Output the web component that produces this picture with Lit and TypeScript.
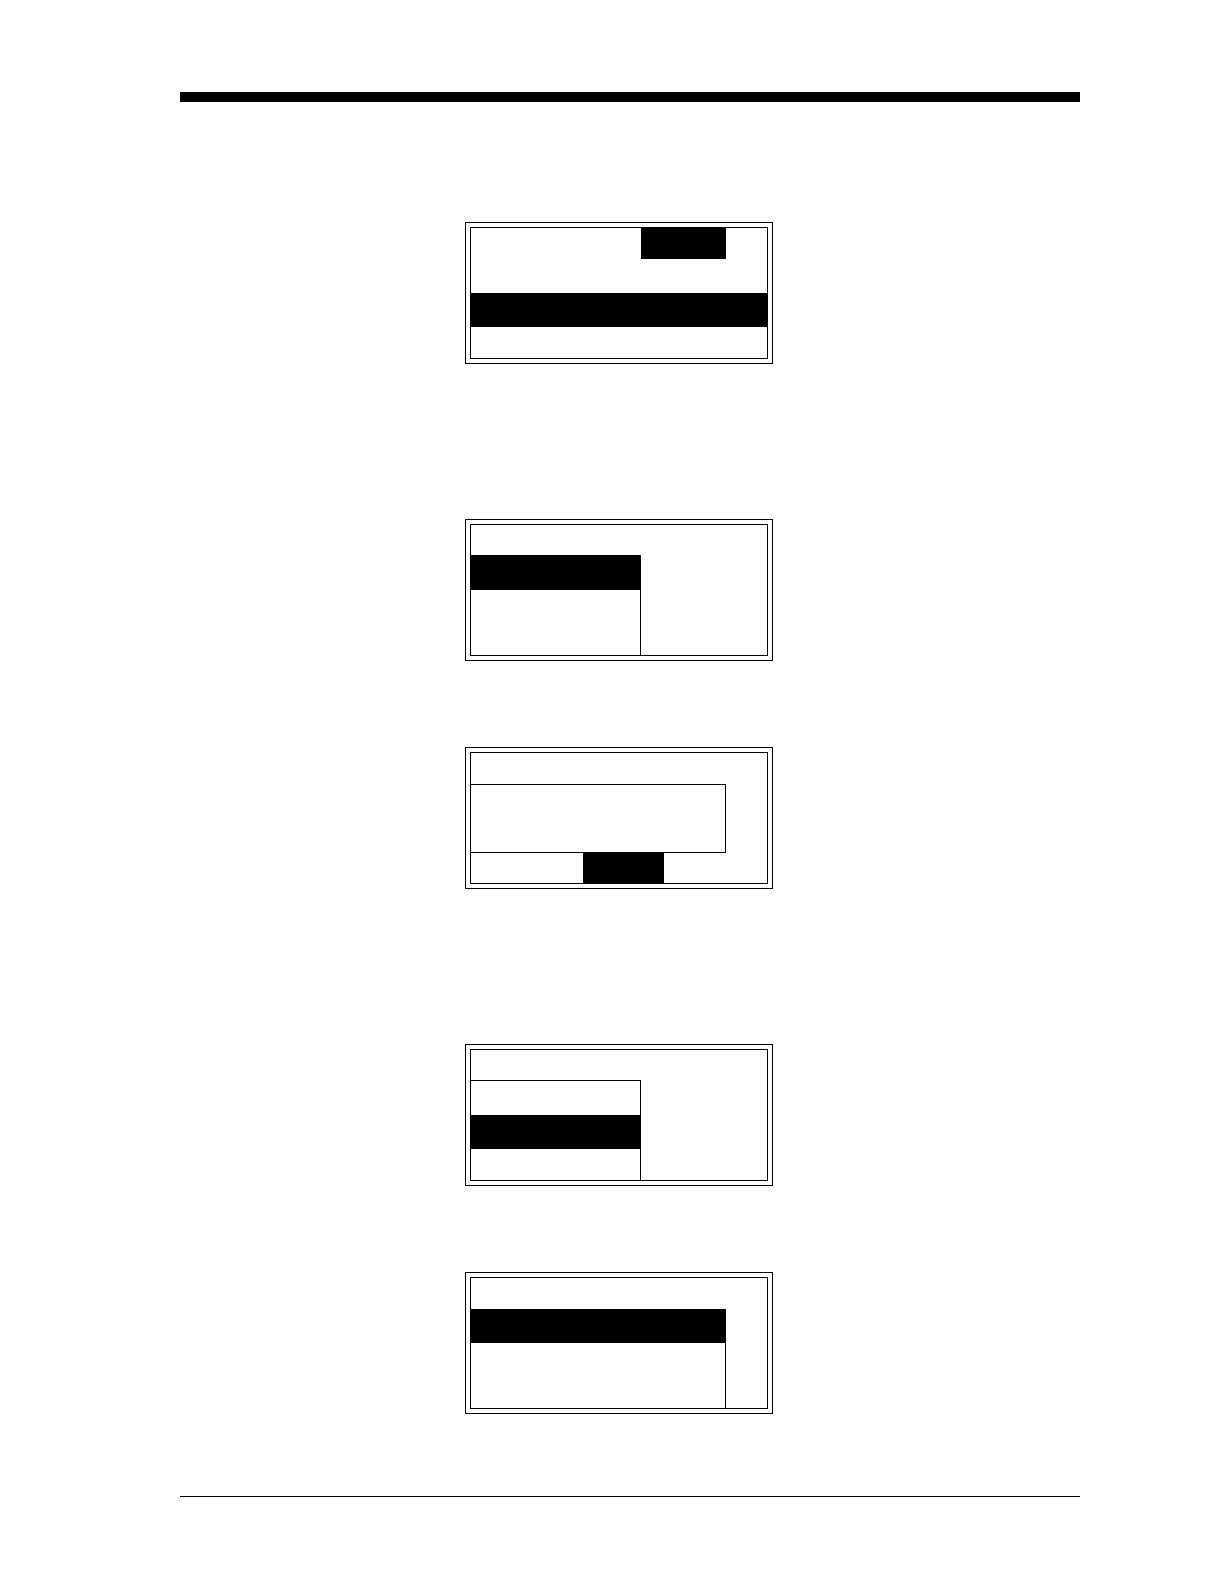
import { LitElement, html, css } from "lit";
import { customElement, property } from "lit/decorators.js";

type ScreenKind = "tab" | "narrow-first" | "dialog" | "narrow-second" | "wide-first";

/** A four-line panel display inside a double frame. */
@customElement("panel-screen")
class PanelScreen extends LitElement {
  @property() kind: ScreenKind = "tab";

  static styles = css`
    :host {
      display: block;
      box-sizing: border-box;
      width: 308px;
      padding: 4px;
      border: 1px solid #000;
    }
    .display {
      display: flex;
      flex-direction: column;
      border: 1px solid #000;
    }
    .line {
      height: 34px;
    }
    .edge {
      height: 31px;
    }
    .title {
      height: 30px;
    }
    .filled {
      background: #000;
    }
    .tab {
      width: 85px;
      height: 31px;
      margin-left: 170px;
    }
    .menu {
      box-sizing: border-box;
      border-top: 1px solid #000;
      border-right: 1px solid #000;
    }
    .narrow {
      width: 170px;
    }
    .wide {
      width: 255px;
    }
    .wide .line:first-child {
      height: 33px;
    }
    .dialog {
      height: 69px;
      border-bottom: 1px solid #000;
    }
    .button {
      width: 81px;
      height: 30px;
      margin-left: 112px;
    }
  `;

  private menu(width: string, selected: number) {
    return html`<div class="menu ${width}">
      ${[0, 1, 2].map(
        (i) => html`<div class="${i === 2 ? "edge" : "line"} ${i === selected ? "filled" : ""}"></div>`
      )}
    </div>`;
  }

  private content() {
    switch (this.kind) {
      case "narrow-first":
        return html`<div class="title"></div>${this.menu("narrow", 0)}`;
      case "narrow-second":
        return html`<div class="title"></div>${this.menu("narrow", 1)}`;
      case "wide-first":
        return html`<div class="edge"></div>${this.menu("wide", 0)}`;
      case "dialog":
        return html`<div class="edge"></div>
          <div class="menu wide dialog"></div>
          <div class="button filled"></div>`;
      default:
        return html`<div class="tab filled"></div>
          <div class="line"></div>
          <div class="line filled"></div>
          <div class="edge"></div>`;
    }
  }

  render() {
    return html`<div class="display">${this.content()}</div>`;
  }
}

@customElement("app-root")
class AppRoot extends LitElement {
  static styles = css`
    :host {
      display: block;
      background: #fff;
    }
    .page {
      box-sizing: border-box;
      min-height: 100vh;
      display: flex;
      flex-direction: column;
      padding: 92px 144px 87px 180px;
    }
    .rule {
      width: 100%;
      margin: 0;
      border: 0;
      background: #000;
    }
    .top {
      height: 10px;
    }
    .bottom {
      height: 1px;
    }
    .steps {
      flex: 1;
      display: flex;
      flex-direction: column;
      align-items: center;
      gap: 155px;
      padding: 120px 22px 82px 0;
    }
    .pair {
      display: flex;
      flex-direction: column;
      gap: 86px;
    }
  `;

  render() {
    return html`<div class="page">
      <hr class="rule top" />
      <main class="steps">
        <panel-screen kind="tab"></panel-screen>
        <section class="pair">
          <panel-screen kind="narrow-first"></panel-screen>
          <panel-screen kind="dialog"></panel-screen>
        </section>
        <section class="pair">
          <panel-screen kind="narrow-second"></panel-screen>
          <panel-screen kind="wide-first"></panel-screen>
        </section>
      </main>
      <hr class="rule bottom" />
    </div>`;
  }
}
